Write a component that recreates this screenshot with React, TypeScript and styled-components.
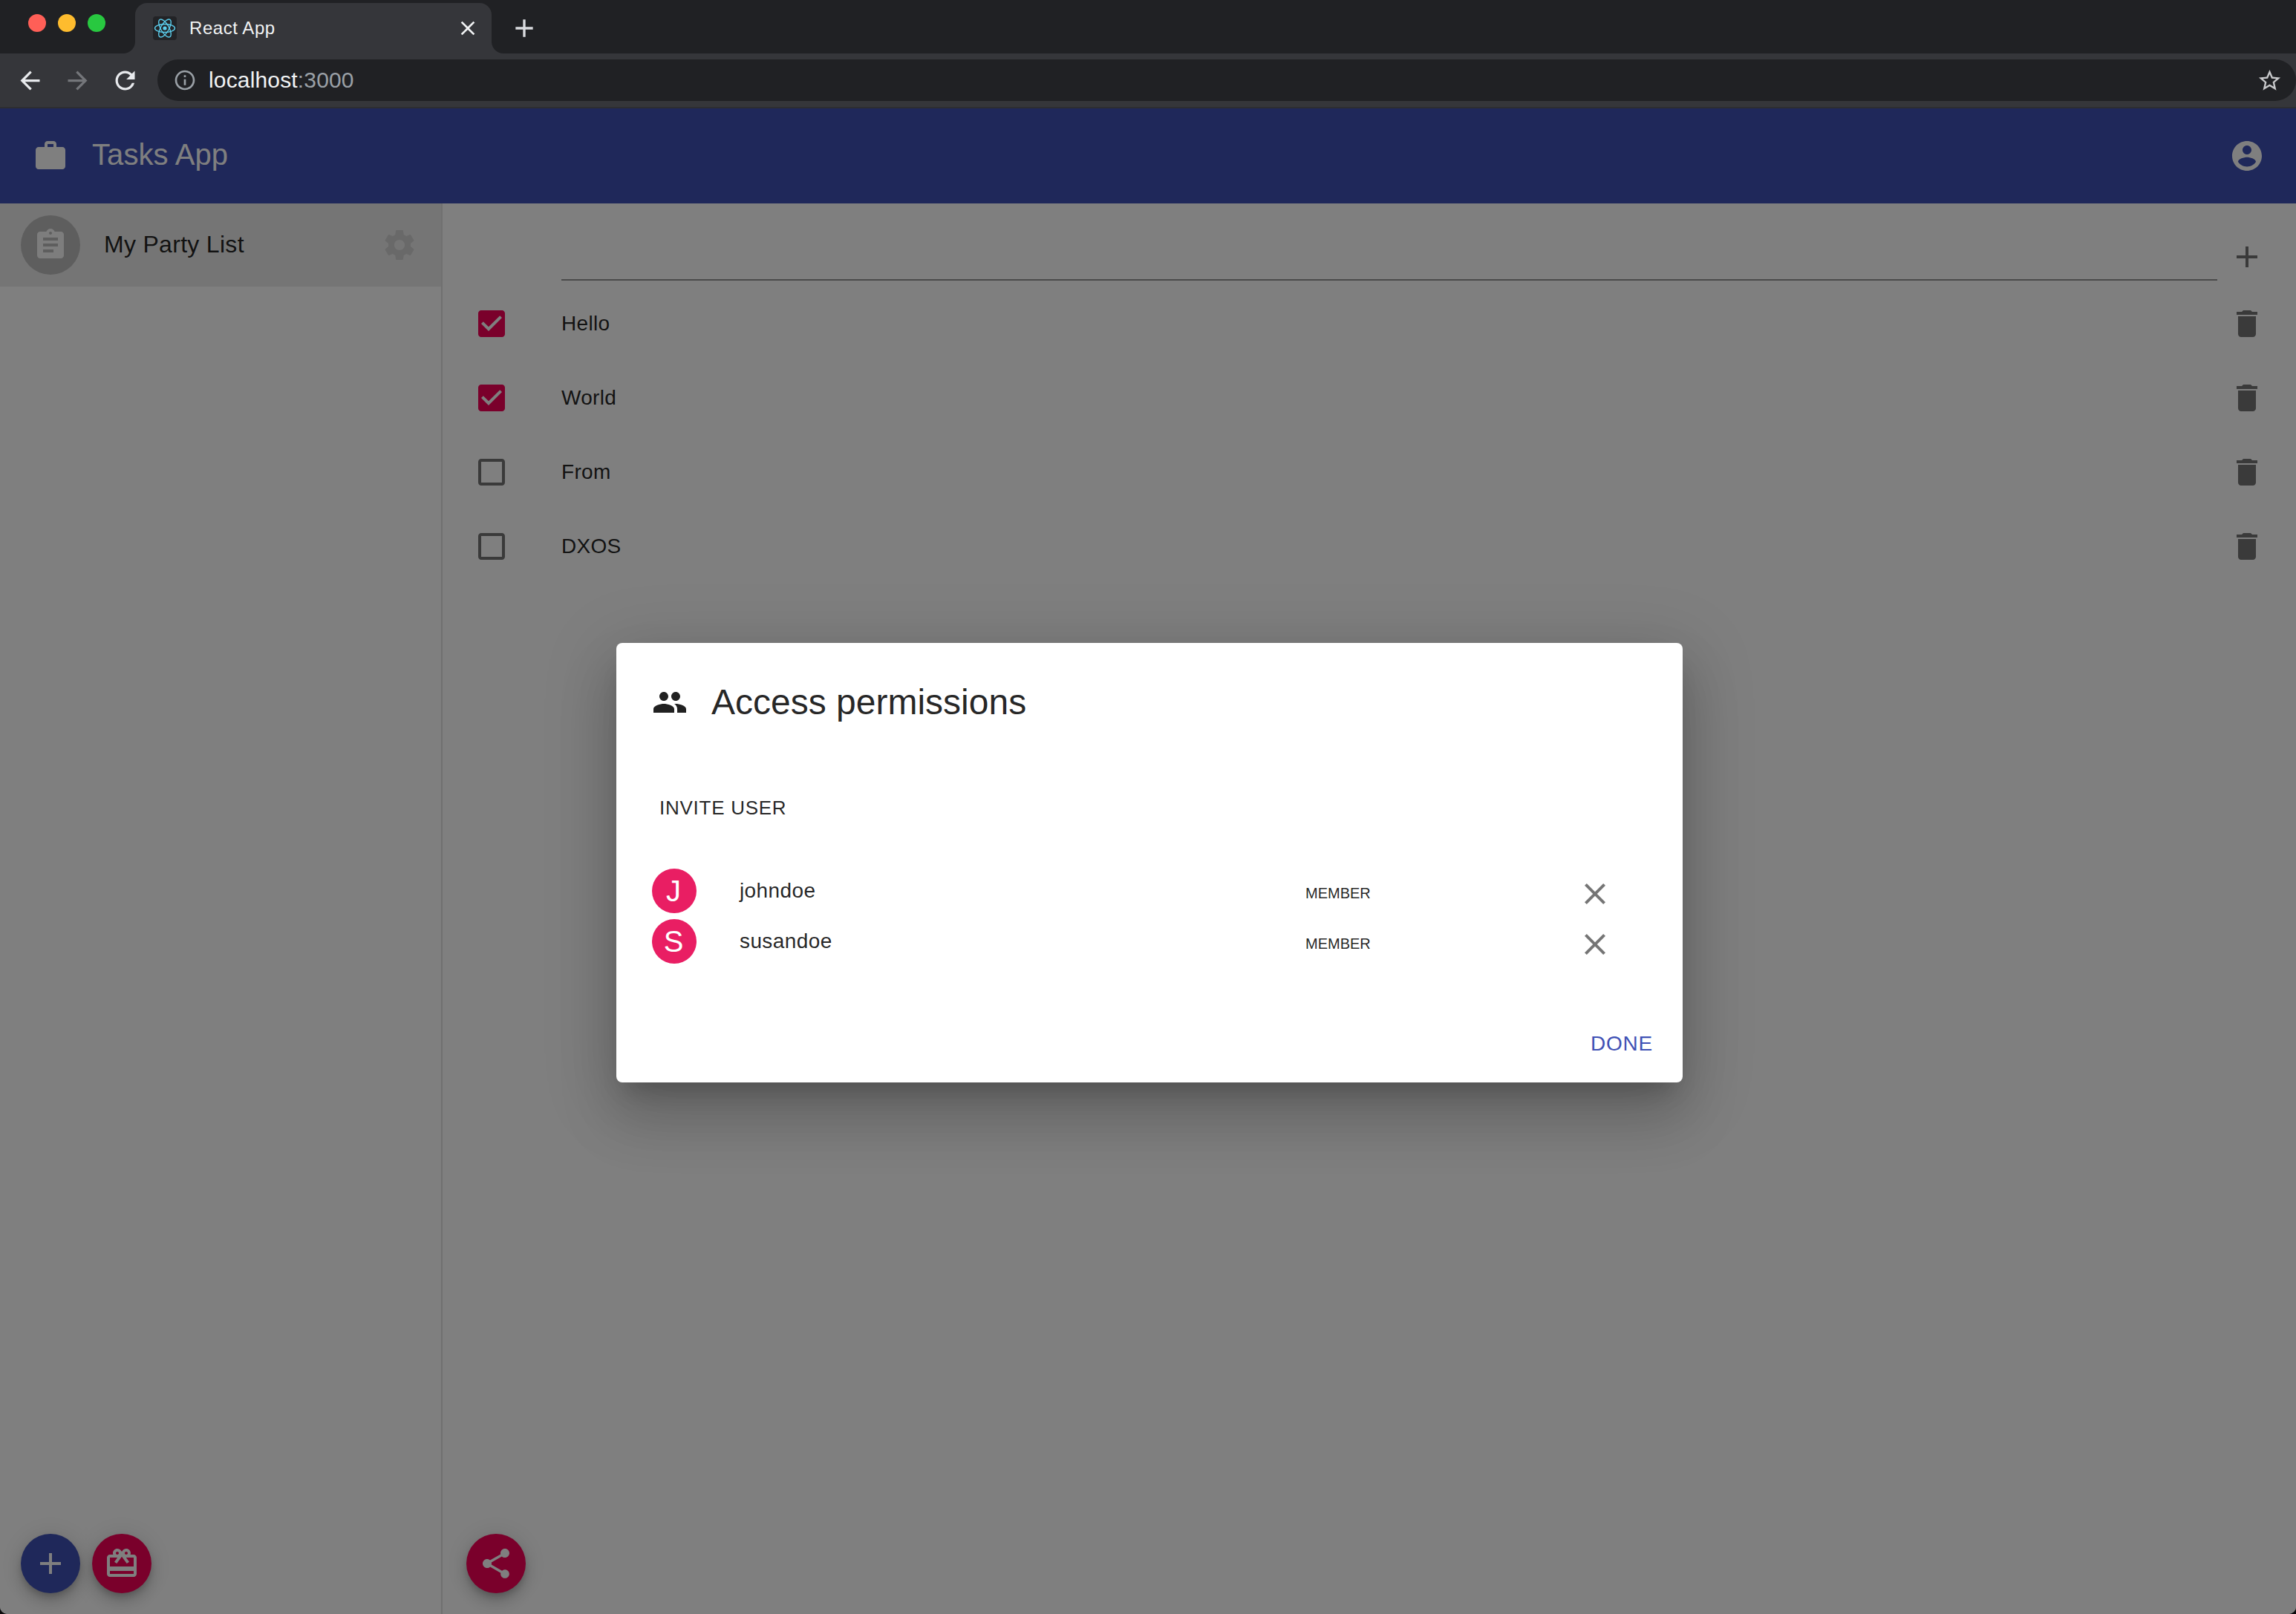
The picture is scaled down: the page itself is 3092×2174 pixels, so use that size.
import React from "react";
import styled, { createGlobalStyle } from "styled-components";

const P = {
  back: "M20 11H7.83l5.59-5.59L12 4l-8 8 8 8 1.41-1.41L7.83 13H20v-2z",
  forward: "M12 4l-1.41 1.41L16.17 11H4v2h12.17l-5.58 5.59L12 20l8-8z",
  reload: "M17.65 6.35C16.2 4.9 14.21 4 12 4c-4.42 0-7.99 3.58-7.99 8s3.57 8 7.99 8c3.73 0 6.84-2.55 7.73-6h-2.08c-.82 2.33-3.04 4-5.65 4-3.31 0-6-2.69-6-6s2.69-6 6-6c1.66 0 3.14.69 4.22 1.78L13 11h7V4l-2.35 2.35z",
  info: "M11 7h2v2h-2zm0 4h2v6h-2zm1-9C6.48 2 2 6.48 2 12s4.48 10 10 10 10-4.48 10-10S17.52 2 12 2zm0 18c-4.41 0-8-3.59-8-8s3.59-8 8-8 8 3.59 8 8-3.59 8-8 8z",
  star: "M22 9.24l-7.19-.62L12 2 9.19 8.63 2 9.24l5.46 4.73L5.82 21 12 17.27 18.18 21l-1.63-7.03L22 9.24zM12 15.4l-3.76 2.27 1-4.28-3.32-2.88 4.38-.38L12 6.1l1.71 4.04 4.38.38-3.32 2.88 1 4.28L12 15.4z",
  work: "M20 6h-4V4c0-1.11-.89-2-2-2h-4c-1.11 0-2 .89-2 2v2H4c-1.11 0-1.99.89-1.99 2L2 19c0 1.11.89 2 2 2h16c1.11 0 2-.89 2-2V8c0-1.11-.89-2-2-2zm-6 0h-4V4h4v2z",
  account: "M12 2C6.48 2 2 6.48 2 12s4.48 10 10 10 10-4.48 10-10S17.52 2 12 2zm0 3c1.66 0 3 1.34 3 3s-1.34 3-3 3-3-1.34-3-3 1.34-3 3-3zm0 14.2c-2.5 0-4.71-1.28-6-3.22.03-1.99 4-3.08 6-3.08 1.99 0 5.97 1.09 6 3.08-1.29 1.94-3.5 3.22-6 3.22z",
  assignment: "M19 3h-4.18C14.4 1.84 13.3 1 12 1c-1.3 0-2.4.84-2.82 2H5c-1.1 0-2 .9-2 2v14c0 1.1.9 2 2 2h14c1.1 0 2-.9 2-2V5c0-1.1-.9-2-2-2zm-7 0c.55 0 1 .45 1 1s-.45 1-1 1-1-.45-1-1 .45-1 1-1zm2 14H7v-2h7v2zm3-4H7v-2h10v2zm0-4H7V7h10v2z",
  settings: "M19.43 12.98c.04-.32.07-.64.07-.98s-.03-.66-.07-.98l2.11-1.65c.19-.15.24-.42.12-.64l-2-3.46c-.12-.22-.39-.3-.61-.22l-2.49 1c-.52-.4-1.08-.73-1.69-.98l-.38-2.65C14.46 2.18 14.25 2 14 2h-4c-.25 0-.46.18-.49.42l-.38 2.65c-.61.25-1.17.59-1.69.98l-2.49-1c-.23-.09-.49 0-.61.22l-2 3.46c-.13.22-.07.49.12.64l2.11 1.65c-.04.32-.07.65-.07.98s.03.66.07.98l-2.11 1.65c-.19.15-.24.42-.12.64l2 3.46c.12.22.39.3.61.22l2.49-1c.52.4 1.08.73 1.69.98l.38 2.65c.03.24.24.42.49.42h4c.25 0 .46-.18.49-.42l.38-2.65c.61-.25 1.17-.59 1.69-.98l2.49 1c.23.09.49 0 .61-.22l2-3.46c.12-.22.07-.49-.12-.64l-2.11-1.65zM12 15.5c-1.93 0-3.5-1.57-3.5-3.5s1.57-3.5 3.5-3.5 3.5 1.57 3.5 3.5-1.57 3.5-3.5 3.5z",
  add: "M19 13h-6v6h-2v-6H5v-2h6V5h2v6h6v2z",
  close: "M19 6.41L17.59 5 12 10.59 6.41 5 5 6.41 10.59 12 5 17.59 6.41 19 12 13.41 17.59 19 19 17.59 13.41 12z",
  checked: "M19 3H5c-1.11 0-2 .9-2 2v14c0 1.1.89 2 2 2h14c1.11 0 2-.9 2-2V5c0-1.1-.89-2-2-2zm-9 14l-5-5 1.41-1.41L10 14.17l7.59-7.59L19 8l-9 9z",
  unchecked: "M19 5v14H5V5h14m0-2H5c-1.1 0-2 .9-2 2v14c0 1.1.9 2 2 2h14c1.1 0 2-.9 2-2V5c0-1.1-.9-2-2-2z",
  trash: "M6 19c0 1.1.9 2 2 2h8c1.1 0 2-.9 2-2V7H6v12zM19 4h-3.5l-1-1h-5l-1 1H5v2h14V4z",
  people: "M16 11c1.66 0 2.99-1.34 2.99-3S17.66 5 16 5c-1.66 0-3 1.34-3 3s1.34 3 3 3zm-8 0c1.66 0 2.99-1.34 2.99-3S9.66 5 8 5C6.34 5 5 6.34 5 8s1.34 3 3 3zm0 2c-2.33 0-7 1.17-7 3.5V19h14v-2.5c0-2.33-4.67-3.5-7-3.5zm8 0c-.29 0-.62.02-.97.05 1.16.84 1.97 1.97 1.97 3.45V19h6v-2.5c0-2.33-4.67-3.5-7-3.5z",
  redeem: "M20 6h-2.18c.11-.31.18-.65.18-1 0-1.66-1.34-3-3-3-1.05 0-1.96.54-2.5 1.35l-.5.67-.5-.68C10.96 2.54 10.05 2 9 2 7.34 2 6 3.34 6 5c0 .35.07.69.18 1H4c-1.11 0-1.99.89-1.99 2L2 19c0 1.11.89 2 2 2h16c1.11 0 2-.89 2-2V8c0-1.11-.89-2-2-2zm-5-2c.55 0 1 .45 1 1s-.45 1-1 1-1-.45-1-1 .45-1 1-1zM9 4c.55 0 1 .45 1 1s-.45 1-1 1-1-.45-1-1 .45-1 1-1zm11 15H4v-2h16v2zm0-5H4V8h5.08L7 10.83 8.62 12 11 8.76l1-1.36 1 1.36L15.38 12 17 10.83 14.92 8H20v6z",
  share: "M18 16.08c-.76 0-1.44.3-1.96.77L8.91 12.7c.05-.23.09-.46.09-.7s-.04-.47-.09-.7l7.05-4.11c.54.5 1.25.81 2.04.81 1.66 0 3-1.34 3-3s-1.34-3-3-3-3 1.34-3 3c0 .24.04.47.09.7L8.04 9.81C7.5 9.31 6.79 9 6 9c-1.66 0-3 1.34-3 3s1.34 3 3 3c.79 0 1.5-.31 2.04-.81l7.12 4.16c-.05.21-.08.43-.08.65 0 1.61 1.31 2.92 2.92 2.92 1.61 0 2.92-1.31 2.92-2.92s-1.31-2.92-2.92-2.92z",
};

const Global = createGlobalStyle`
  html, body { margin: 0; padding: 0; background: #0b0b0c; }
  * { box-sizing: border-box; }
  body { font-family: "Liberation Sans", Arial, sans-serif; }
`;

const Svg = styled.svg<{ $size?: number; $color?: string }>`
  display: block;
  flex: none;
  width: ${(p) => p.$size ?? 48}px;
  height: ${(p) => p.$size ?? 48}px;
  fill: ${(p) => p.$color ?? "currentColor"};
`;

const Icon = ({ d, size, color }: { d: string; size?: number; color?: string }) => (
  <Svg viewBox="0 0 24 24" $size={size} $color={color}>
    <path d={d} />
  </Svg>
);

const Window = styled.div`
  width: 3092px;
  height: 2174px;
  display: flex;
  flex-direction: column;
  overflow: hidden;
  border-radius: 0 0 10px 10px;
  background: #fff;
`;

/* Browser chrome */
const TabStrip = styled.div`
  height: 72px;
  flex: none;
  background: #202124;
  display: flex;
  align-items: flex-start;
`;
const Lights = styled.div`
  display: flex;
  gap: 16px;
  margin: 19px 0 0 38px;
`;
const Light = styled.span<{ $c: string }>`
  width: 24px;
  height: 24px;
  border-radius: 50%;
  background: ${(p) => p.$c};
`;
const Tab = styled.div`
  position: relative;
  width: 480px;
  height: 68px;
  margin: 4px 0 0 40px;
  padding: 0 16px 0 24px;
  display: flex;
  align-items: center;
  gap: 17px;
  background: #35363a;
  border-radius: 16px 16px 0 0;
  &::before,
  &::after {
    content: "";
    position: absolute;
    bottom: 0;
    width: 16px;
    height: 16px;
  }
  &::before {
    left: -16px;
    background: radial-gradient(circle at 0 0, #202124 15.5px, #35363a 16.5px);
  }
  &::after {
    right: -16px;
    background: radial-gradient(circle at 100% 0, #202124 15.5px, #35363a 16.5px);
  }
`;
const Favicon = styled.div`
  width: 32px;
  height: 32px;
  flex: none;
  background: #222326;
  border-radius: 4px;
`;
const TabTitle = styled.span`
  flex: 1;
  font-size: 24px;
  letter-spacing: 0.55px;
  color: #f1f3f4;
`;
const NewTab = styled.div`
  margin: 18px 0 0 24px;
  color: #dadce0;
`;
const Toolbar = styled.div`
  height: 74px;
  flex: none;
  background: #35363a;
  border-bottom: 2px solid #2d2e31;
  padding: 8px 0 8px 8px;
  display: flex;
  align-items: center;
`;
const NavButton = styled.div<{ $dim?: boolean }>`
  width: 64px;
  height: 56px;
  display: flex;
  align-items: center;
  justify-content: center;
  color: ${(p) => (p.$dim ? "#74767a" : "#e8eaed")};
`;
const AddressBar = styled.div`
  flex: 1;
  height: 56px;
  margin-left: 12px;
  padding: 0 18px 0 21px;
  display: flex;
  align-items: center;
  gap: 16px;
  background: #202124;
  border-radius: 28px;
`;
const Url = styled.div`
  flex: 1;
  font-size: 30px;
  letter-spacing: 0.16px;
  color: #f1f3f4;
`;
const UrlPort = styled.span`
  color: #9aa0a6;
`;

/* Application */
const AppArea = styled.div`
  position: relative;
  flex: 1;
  min-height: 0;
  display: flex;
  flex-direction: column;
`;
const AppBar = styled.header`
  height: 128px;
  flex: none;
  background: #3f51b5;
  color: #fff;
  padding: 0 42px 0 44px;
  display: flex;
  align-items: center;
`;
const AppTitle = styled.h1`
  flex: 1;
  margin: 0 0 3px 32px;
  font-size: 40px;
  letter-spacing: 0.08px;
  font-weight: 400;
  color: #fff;
`;
const Body = styled.div`
  flex: 1;
  min-height: 0;
  display: flex;
`;
const Sidebar = styled.aside`
  width: 596px;
  flex: none;
  border-right: 2px solid rgba(0, 0, 0, 0.12);
  display: flex;
  flex-direction: column;
`;
const PartyItem = styled.div`
  height: 112px;
  flex: none;
  padding: 0 32px 0 28px;
  background: rgba(0, 0, 0, 0.08);
  display: flex;
  align-items: center;
`;
const PartyAvatar = styled.div`
  width: 80px;
  height: 80px;
  flex: none;
  border-radius: 50%;
  background: #bdbdbd;
  color: #fafafa;
  display: flex;
  align-items: center;
  justify-content: center;
`;
const PartyName = styled.span`
  flex: 1;
  margin: 0 0 1px 32px;
  font-size: 32px;
  letter-spacing: 0.3px;
  color: rgba(0, 0, 0, 0.87);
`;
const FabRow = styled.div<{ $pad: number }>`
  margin-top: auto;
  padding: 0 0 28px ${(p) => p.$pad}px;
  display: flex;
  gap: 16px;
`;
const Fab = styled.div<{ $c: string }>`
  width: 80px;
  height: 80px;
  border-radius: 50%;
  background: ${(p) => p.$c};
  color: #fff;
  display: flex;
  align-items: center;
  justify-content: center;
  box-shadow: 0 6px 10px -2px rgba(0, 0, 0, 0.2), 0 12px 20px 0 rgba(0, 0, 0, 0.14), 0 2px 36px 0 rgba(0, 0, 0, 0.12);
`;
const Main = styled.main`
  flex: 1;
  min-width: 0;
  display: flex;
  flex-direction: column;
`;
const NewTaskRow = styled.div`
  height: 112px;
  flex: none;
  padding: 0 42px 0 160px;
  display: flex;
  align-items: flex-start;
  gap: 16px;
  color: rgba(0, 0, 0, 0.54);
`;
const NewTaskInput = styled.input`
  flex: 1;
  min-width: 0;
  height: 104px;
  border: 0;
  border-bottom: 2px solid rgba(0, 0, 0, 0.42);
  background: transparent;
  outline: none;
`;
const AddSlot = styled.div`
  margin-top: 48px;
`;
const TaskRow = styled.div`
  height: 100px;
  flex: none;
  padding: 0 42px;
  display: flex;
  align-items: center;
  color: rgba(0, 0, 0, 0.54);
`;
const CheckSlot = styled.div<{ $on: boolean }>`
  margin-right: 70px;
  color: ${(p) => (p.$on ? "#f50057" : "rgba(0, 0, 0, 0.54)")};
`;
const TaskText = styled.span`
  flex: 1;
  font-size: 28px;
  letter-spacing: 0.3px;
  color: rgba(0, 0, 0, 0.87);
`;

/* Dialog */
const Backdrop = styled.div`
  position: absolute;
  inset: 0;
  padding: 4px 0 0 4px;
  background: rgba(0, 0, 0, 0.5);
  display: flex;
  align-items: center;
  justify-content: center;
`;
const Dialog = styled.div`
  width: 1436px;
  padding-top: 56px;
  background: #fff;
  border-radius: 8px;
  box-shadow: 0 22px 30px -14px rgba(0, 0, 0, 0.2), 0 48px 76px 6px rgba(0, 0, 0, 0.14), 0 18px 92px 16px rgba(0, 0, 0, 0.12);
`;
const DialogHeader = styled.div`
  height: 48px;
  padding: 0 48px;
  display: flex;
  align-items: center;
  gap: 32px;
  color: rgba(0, 0, 0, 0.87);
`;
const DialogTitle = styled.h2`
  margin: 0;
  font-size: 48px;
  line-height: 48px;
  font-weight: 400;
  color: rgba(0, 0, 0, 0.87);
`;
const InviteButton = styled.div`
  height: 56px;
  margin: 90px 0 50px 48px;
  padding-left: 10px;
  display: flex;
  align-items: center;
  font-size: 26px;
  letter-spacing: 0.74px;
  color: rgba(0, 0, 0, 0.87);
`;
const MemberRow = styled.div`
  height: 68px;
  margin-left: 48px;
  display: grid;
  grid-template-columns: 118px 762px 366px 48px;
  align-items: center;
`;
const MemberAvatar = styled.div`
  width: 60px;
  height: 60px;
  border-radius: 50%;
  background: #e91e63;
  color: #fff;
  font-size: 40px;
  padding-right: 2px;
  display: flex;
  align-items: center;
  justify-content: center;
`;
const MemberName = styled.span`
  font-size: 28px;
  letter-spacing: 0.4px;
  color: rgba(0, 0, 0, 0.87);
`;
const MemberRole = styled.span`
  margin-top: 7px;
  font-size: 20px;
  color: rgba(0, 0, 0, 0.87);
`;
const RemoveSlot = styled.div`
  margin-top: 8px;
  color: rgba(0, 0, 0, 0.54);
`;
const DialogActions = styled.div`
  margin-top: 76px;
  padding: 0 40px 24px 0;
  display: flex;
  justify-content: flex-end;
`;
const DoneButton = styled.div`
  height: 56px;
  display: flex;
  align-items: center;
  font-size: 28px;
  letter-spacing: 0.8px;
  color: #3f51b5;
`;

const ReactLogo = () => (
  <svg viewBox="0 0 32 32" width="32" height="32" fill="none" stroke="#5ccfee" strokeWidth="1.4">
    <ellipse cx="16" cy="16" rx="13.5" ry="5.5" />
    <ellipse cx="16" cy="16" rx="13.5" ry="5.5" transform="rotate(60 16 16)" />
    <ellipse cx="16" cy="16" rx="13.5" ry="5.5" transform="rotate(120 16 16)" />
    <circle cx="16" cy="16" r="2.6" fill="#5ccfee" stroke="none" />
  </svg>
);

const tasks = [
  { text: "Hello", done: true },
  { text: "World", done: true },
  { text: "From", done: false },
  { text: "DXOS", done: false },
];
const members = [
  { initial: "J", name: "johndoe" },
  { initial: "S", name: "susandoe" },
];

export default function App() {
  return (
    <>
      <Global />
      <Window>
        <TabStrip>
          <Lights>
            <Light $c="#ff5f57" />
            <Light $c="#febc2e" />
            <Light $c="#28c840" />
          </Lights>
          <Tab>
            <Favicon>
              <ReactLogo />
            </Favicon>
            <TabTitle>React App</TabTitle>
            <Icon d={P.close} size={32} color="#f1f3f4" />
          </Tab>
          <NewTab>
            <Icon d={P.add} size={40} />
          </NewTab>
        </TabStrip>
        <Toolbar>
          <NavButton>
            <Icon d={P.back} size={39} />
          </NavButton>
          <NavButton $dim>
            <Icon d={P.forward} size={39} />
          </NavButton>
          <NavButton>
            <Icon d={P.reload} size={39} />
          </NavButton>
          <AddressBar>
            <Icon d={P.info} size={32} color="#9aa0a6" />
            <Url>
              localhost<UrlPort>:3000</UrlPort>
            </Url>
            <Icon d={P.star} size={35} color="#c8c9cb" />
          </AddressBar>
        </Toolbar>
        <AppArea>
          <AppBar>
            <Icon d={P.work} />
            <AppTitle>Tasks App</AppTitle>
            <Icon d={P.account} />
          </AppBar>
          <Body>
            <Sidebar>
              <PartyItem>
                <PartyAvatar>
                  <Icon d={P.assignment} />
                </PartyAvatar>
                <PartyName>My Party List</PartyName>
                <Icon d={P.settings} color="rgba(0,0,0,0.1)" />
              </PartyItem>
              <FabRow $pad={28}>
                <Fab $c="#3f51b5">
                  <Icon d={P.add} />
                </Fab>
                <Fab $c="#f50057">
                  <Icon d={P.redeem} />
                </Fab>
              </FabRow>
            </Sidebar>
            <Main>
              <NewTaskRow>
                <NewTaskInput aria-label="New task" />
                <AddSlot>
                  <Icon d={P.add} />
                </AddSlot>
              </NewTaskRow>
              {tasks.map((t) => (
                <TaskRow key={t.text}>
                  <CheckSlot $on={t.done}>
                    <Icon d={t.done ? P.checked : P.unchecked} />
                  </CheckSlot>
                  <TaskText>{t.text}</TaskText>
                  <Icon d={P.trash} />
                </TaskRow>
              ))}
              <FabRow $pad={32}>
                <Fab $c="#f50057">
                  <Icon d={P.share} />
                </Fab>
              </FabRow>
            </Main>
          </Body>
          <Backdrop>
            <Dialog>
              <DialogHeader>
                <Icon d={P.people} />
                <DialogTitle>Access permissions</DialogTitle>
              </DialogHeader>
              <InviteButton>INVITE USER</InviteButton>
              {members.map((m) => (
                <MemberRow key={m.name}>
                  <MemberAvatar>{m.initial}</MemberAvatar>
                  <MemberName>{m.name}</MemberName>
                  <MemberRole>MEMBER</MemberRole>
                  <RemoveSlot>
                    <Icon d={P.close} />
                  </RemoveSlot>
                </MemberRow>
              ))}
              <DialogActions>
                <DoneButton>DONE</DoneButton>
              </DialogActions>
            </Dialog>
          </Backdrop>
        </AppArea>
      </Window>
    </>
  );
}
